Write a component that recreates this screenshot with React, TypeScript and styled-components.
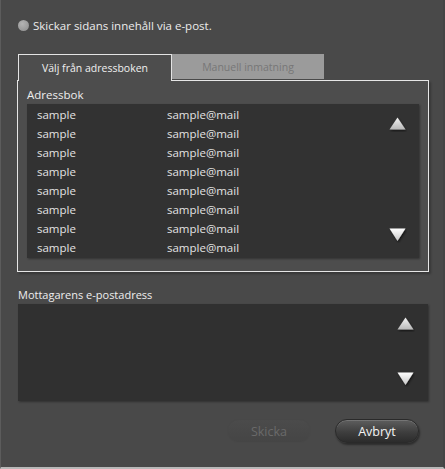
import React from "react";
import styled, { createGlobalStyle } from "styled-components";

const Global = createGlobalStyle`
  html, body { margin: 0; padding: 0; background: #484848; }
  body { font-family: "Open Sans", "Noto Sans", sans-serif; }
  * { box-sizing: border-box; }
`;

const Dialog = styled.div`
  width: 445px;
  height: 469px;
  background: #494949;
  border-left: 1px solid #5c5c5c;
  border-right: 2px solid #444;
  border-bottom: 2px solid #b9b9b9;
  padding: 0 14px 0 16px;
  display: flex;
  flex-direction: column;
  color: #ececec;
  font-size: 11.5px;
`;

const Header = styled.div`
  display: flex;
  align-items: center;
  gap: 4px;
  margin-top: 18px;
  height: 15px;
  padding-left: 1px;
  font-size: 11.5px;
`;

const Dot = styled.span`
  width: 11px;
  height: 11px;
  border-radius: 50%;
  background: radial-gradient(circle at 40% 35%, #b4b4b4, #8c8c8c);
`;

const Tabs = styled.div`
  display: flex;
  margin-top: 21px;
  padding-left: 1px;
  position: relative;
  z-index: 1;
`;

const Tab = styled.div<{ $active?: boolean }>`
  width: ${(p) => (p.$active ? 154 : 152)}px;
  height: ${(p) => (p.$active ? 27 : 25)}px;
  display: flex;
  align-items: center;
  justify-content: center;
  padding-bottom: ${(p) => (p.$active ? 1 : 0)}px;
  font-size: 10.5px;
  background: ${(p) => (p.$active ? "#4d4d4d" : "#9b9b9b")};
  color: ${(p) => (p.$active ? "#f0f0f0" : "#777")};
  border: ${(p) => (p.$active ? "1px solid #e4e4e4" : "none")};
  border-bottom: none;
  margin-bottom: ${(p) => (p.$active ? -1 : 0)}px;
  align-self: flex-start;
`;

const Panel = styled.div`
  width: 412px;
  height: 192px;
  border: 1px solid #e6e6e6;
  background: #4d4d4d;
  box-shadow: 2px 2px 2px rgba(0, 0, 0, 0.25);
  padding: 5px 9px 0 9px;
  display: flex;
  flex-direction: column;
`;

const Label = styled.div`
  font-size: 11.5px;
  line-height: 18px;
  color: #eeeeee;
`;

const ListBox = styled.div`
  height: 154px;
  background: #323232;
  box-shadow: 1px 1px 2px rgba(0, 0, 0, 0.35);
  display: flex;
`;

const Rows = styled.div`
  flex: 1;
  padding: 1px 0 0 10px;
`;

const Row = styled.div`
  display: flex;
  height: 19px;
  align-items: center;
  font-size: 11.5px;
  color: #e2e2e2;
`;

const Name = styled.span`
  width: 130px;
`;

const Scroll = styled.div<{ $top: number; $bottom: number; $right: number }>`
  display: flex;
  flex-direction: column;
  justify-content: space-between;
  padding: ${(p) => `${p.$top}px ${p.$right}px ${p.$bottom}px 0`};
`;

const RecipientLabel = styled(Label)`
  margin-top: 14px;
  padding-left: 1px;
  font-size: 11px;
`;

const RecipientBox = styled.div`
  width: 410px;
  height: 97px;
  margin-left: 1px;
  background: #303030;
  box-shadow: 1px 1px 2px rgba(0, 0, 0, 0.35);
  display: flex;
  justify-content: flex-end;
`;

const Buttons = styled.div`
  display: flex;
  justify-content: flex-end;
  gap: 24px;
  margin-top: 18px;
  padding-right: 10px;
`;

const Button = styled.button<{ $disabled?: boolean }>`
  width: 84px;
  height: 24px;
  border-radius: 12px;
  font-family: inherit;
  font-size: 12.5px;
  padding: 0;
  border: 1px solid ${(p) => (p.$disabled ? "#484848" : "#2a2a2a")};
  color: ${(p) => (p.$disabled ? "#6a6a6a" : "#f4f4f4")};
  background: ${(p) =>
    p.$disabled
      ? "linear-gradient(#4b4b4b, #454545)"
      : "linear-gradient(#5e5e5e, #3e3e3e 55%, #2c2c2c)"};
  box-shadow: ${(p) =>
    p.$disabled ? "none" : "1px 2px 2px rgba(0,0,0,0.4), inset 0 1px 0 rgba(255,255,255,0.15)"};
`;

const Arrow: React.FC<{ down?: boolean; id: string }> = ({ down, id }) => (
  <svg width="18" height="15" viewBox="0 0 18 15" style={{ display: "block" }}>
    <defs>
      <linearGradient id={id} x1="0" y1="0" x2="0" y2="1">
        <stop offset="0" stopColor={down ? "#ffffff" : "#f4f4f4"} />
        <stop offset="1" stopColor={down ? "#c8c8c8" : "#b8b8b8"} />
      </linearGradient>
      <filter id={id + "s"} x="-30%" y="-30%" width="160%" height="160%">
        <feDropShadow dx="1" dy="1.5" stdDeviation="0.8" floodColor="#000" floodOpacity="0.6" />
      </filter>
    </defs>
    <polygon
      points={down ? "0.5,0.5 16.5,0.5 8.5,13" : "8.5,0.5 16.5,12.5 0.5,12.5"}
      fill={`url(#${id})`}
      filter={`url(#${id}s)`}
    />
  </svg>
);

const rows = Array.from({ length: 8 }, () => ({ name: "sample", mail: "sample@mail" }));

export default function App() {
  return (
    <>
      <Global />
      <Dialog>
        <Header>
          <Dot />
          <span>Skickar sidans innehåll via e-post.</span>
        </Header>
        <Tabs>
          <Tab $active>Välj från adressboken</Tab>
          <Tab>Manuell inmatning</Tab>
        </Tabs>
        <Panel>
          <Label>Adressbok</Label>
          <ListBox>
            <Rows>
              {rows.map((r, i) => (
                <Row key={i}>
                  <Name>{r.name}</Name>
                  <span>{r.mail}</span>
                </Row>
              ))}
            </Rows>
            <Scroll $top={13} $bottom={15} $right={12}>
              <Arrow id="a1" />
              <Arrow id="a2" down />
            </Scroll>
          </ListBox>
        </Panel>
        <RecipientLabel>Mottagarens e-postadress</RecipientLabel>
        <RecipientBox>
          <Scroll $top={13} $bottom={14} $right={13}>
            <Arrow id="a3" />
            <Arrow id="a4" down />
          </Scroll>
        </RecipientBox>
        <Buttons>
          <Button $disabled>Skicka</Button>
          <Button>Avbryt</Button>
        </Buttons>
      </Dialog>
    </>
  );
}
